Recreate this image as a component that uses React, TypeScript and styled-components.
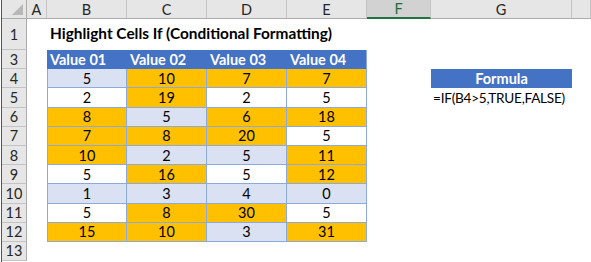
import React from "react";
import styled, { createGlobalStyle, css } from "styled-components";

const Global = createGlobalStyle`
  html, body { margin: 0; padding: 0; background: #ffffff; overflow: hidden; }
  body { font-family: Lato, "Liberation Sans", sans-serif; }
`;

const Window = styled.div`
  display: flex;
  width: 591px;
  height: 262px;
  padding-left: 1px;
  box-sizing: border-box;
`;

const Edge = styled.div`
  width: 1px;
  background: #217346;
  flex: none;
`;

const Sheet = styled.div`
  flex: 1;
  display: grid;
  grid-template-columns: 25px 20px repeat(4, 80px) 64px 141px 1fr;
  grid-template-rows: 19px 31px repeat(11, 19.2px);
  font-size: 14.5px;
  color: #000;
`;

const Corner = styled.div`
  position: relative;
  background: #e6e6e6;
  border-right: 1px solid #ababab;
  border-bottom: 1px solid #ababab;
  &::after {
    content: "";
    position: absolute;
    right: 3px;
    bottom: 3px;
    width: 0;
    height: 0;
    border-left: 11px solid transparent;
    border-bottom: 11px solid #b7b7b7;
  }
`;

const ColHead = styled.div<{ $selected?: boolean }>`
  background: #e6e6e6;
  border-right: 1px solid #c3c3c3;
  border-bottom: 1px solid #ababab;
  display: flex;
  align-items: center;
  justify-content: center;
  color: #262626;
  font-size: 14.5px;
  box-sizing: border-box;
  ${(p) =>
    p.$selected &&
    css`
      background: #d2d2d2;
      border-bottom: 2px solid #217346;
      color: #1c6b3f;
    `}
`;

const RowHead = styled.div`
  background: #e6e6e6;
  border-right: 1px solid #ababab;
  border-bottom: 1px solid #c3c3c3;
  display: flex;
  align-items: center;
  justify-content: center;
  color: #262626;
  font-size: 14.5px;
  box-sizing: border-box;
`;

const Blank = styled.div``;

const Title = styled.div`
  grid-column: span 6;
  display: flex;
  align-items: center;
  padding-left: 3px;
  padding-bottom: 3px;
  font-weight: 700;
  font-size: 15.4px;
  white-space: nowrap;
`;

const TableHead = styled.div<{ $last?: boolean }>`
  background: #4472c4;
  color: #ffffff;
  font-weight: 700;
  display: flex;
  align-items: center;
  padding-left: 3px;
  white-space: nowrap;
  box-sizing: border-box;
  ${(p) => p.$last && css`border-right: 1px solid #8ea9db;`}
`;

type Tone = "hot" | "band" | "plain";
const toneColor: Record<Tone, string> = {
  hot: "#ffc000",
  band: "#d9e1f2",
  plain: "#ffffff",
};

const DataCell = styled.div<{ $tone: Tone; $first?: boolean }>`
  background: ${(p) => toneColor[p.$tone]};
  border-right: 1px solid #8ea9db;
  border-bottom: 1px solid #8ea9db;
  ${(p) => p.$first && css`border-left: 1px solid #8ea9db;`}
  display: flex;
  align-items: center;
  justify-content: center;
  box-sizing: border-box;
`;

const FormulaHead = styled.div`
  background: #4472c4;
  color: #ffffff;
  font-weight: 700;
  display: flex;
  align-items: center;
  justify-content: center;
`;

const FormulaText = styled.div`
  display: flex;
  align-items: center;
  padding-left: 2px;
  white-space: nowrap;
  font-size: 13.6px;
  letter-spacing: -0.25px;
`;

const columns = ["A", "B", "C", "D", "E", "F", "G", ""];

const data: number[][] = [
  [5, 10, 7, 7],
  [2, 19, 2, 5],
  [8, 5, 6, 18],
  [7, 8, 20, 5],
  [10, 2, 5, 11],
  [5, 16, 5, 12],
  [1, 3, 4, 0],
  [5, 8, 30, 5],
  [15, 10, 3, 31],
];

function toneFor(v: number, rowIndex: number): Tone {
  if (v > 5) return "hot";
  return rowIndex % 2 === 0 ? "band" : "plain";
}

function trailing(rowNumber: number) {
  // F, G, H columns
  if (rowNumber === 4) {
    return [
      <Blank key="f" />,
      <FormulaHead key="g">Formula</FormulaHead>,
      <Blank key="h" />,
    ];
  }
  if (rowNumber === 5) {
    return [
      <Blank key="f" />,
      <FormulaText key="g">=IF(B4&gt;5,TRUE,FALSE)</FormulaText>,
      <Blank key="h" />,
    ];
  }
  return [<Blank key="f" />, <Blank key="g" />, <Blank key="h" />];
}

export default function App() {
  return (
    <>
      <Global />
      <Window>
        <Edge />
        <Sheet>
          <Corner />
          {columns.map((c, i) => (
            <ColHead key={i} $selected={c === "F"}>
              {c}
            </ColHead>
          ))}

          <RowHead>1</RowHead>
          <Blank />
          <Title>Highlight Cells If (Conditional Formatting)</Title>
          <Blank />

          <RowHead>3</RowHead>
          <Blank />
          {["Value 01", "Value 02", "Value 03", "Value 04"].map((h, i) => (
            <TableHead key={h} $last={i === 3}>
              {h}
            </TableHead>
          ))}
          <Blank />
          <Blank />
          <Blank />

          {data.map((row, r) => {
            const rowNumber = r + 4;
            return (
              <React.Fragment key={rowNumber}>
                <RowHead>{rowNumber}</RowHead>
                <Blank />
                {row.map((v, c) => (
                  <DataCell key={c} $tone={toneFor(v, r)} $first={c === 0}>
                    {v}
                  </DataCell>
                ))}
                {trailing(rowNumber)}
              </React.Fragment>
            );
          })}

          <RowHead>13</RowHead>
        </Sheet>
      </Window>
    </>
  );
}
